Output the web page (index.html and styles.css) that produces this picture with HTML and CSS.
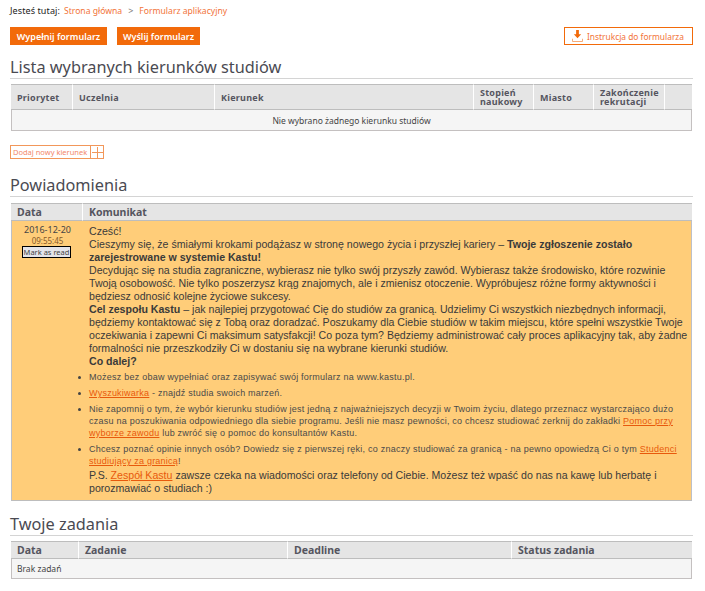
FILE: index.html
```html
<!DOCTYPE html>
<html lang="pl">
<head>
<meta charset="utf-8">
<title>Formularz aplikacyjny</title>
<link rel="stylesheet" href="styles.css">
</head>
<body>
<div class="page">
  <nav class="crumbs"><span class="here">Jesteś tutaj:</span><a href="#">Strona główna</a><span class="sep">&gt;</span><a href="#">Formularz aplikacyjny</a></nav>
  <div class="actions">
    <a class="btn" href="#">Wypełnij formularz</a>
    <a class="btn" href="#">Wyślij formularz</a>
    <a class="btn-outline" href="#">
      <svg class="dl" width="11" height="12" viewBox="0 0 12 13"><path d="M4.500 0h3v4.500H10L6 9 2 4.500h2.500z" fill="#f26a0a"/><path d="M.5 9.500v3h11v-3" fill="none" stroke="#f6a36a"/></svg>
      Instrukcja do formularza
    </a>
  </div>

  <h2 class="title t1">Lista wybranych kierunków studiów</h2>
  <table class="grid g1">
    <colgroup><col class="c1"><col class="c2"><col class="c3"><col class="c4"><col class="c5"><col class="c6"><col></colgroup>
    <thead><tr><th>Priorytet</th><th>Uczelnia</th><th>Kierunek</th><th>Stopień naukowy</th><th>Miasto</th><th>Zakończenie rekrutacji</th><th></th></tr></thead>
    <tbody><tr><td colspan="7" class="empty">Nie wybrano żadnego kierunku studiów</td></tr></tbody>
  </table>
  <a class="add" href="#"><span class="add-label">Dodaj nowy kierunek</span><span class="add-icon"><svg width="11" height="11" viewBox="0 0 11 11"><path d="M5.500 0v11M0 5.500h11" stroke="#f2975a" fill="none"/></svg></span></a>

  <h2 class="title t2">Powiadomienia</h2>
  <table class="grid g2">
    <colgroup><col class="d1"><col></colgroup>
    <thead><tr><th>Data</th><th>Komunikat</th></tr></thead>
    <tbody><tr class="unread">
      <td class="date"><div>2016-12-20</div><div class="time">09:55:45</div><button class="mark" type="button">Mark as read</button></td>
      <td class="msg">
        <p>Cześć!</p>
        <p>Cieszymy się, że śmiałymi krokami podążasz w stronę nowego życia i przyszłej kariery – <b>Twoje zgłoszenie zostało zarejestrowane w systemie Kastu!</b></p>
        <p>Decydując się na studia zagraniczne, wybierasz nie tylko swój przyszły zawód. Wybierasz także środowisko, które rozwinie Twoją osobowość. Nie tylko poszerzysz krąg znajomych, ale i zmienisz otoczenie. Wypróbujesz różne formy aktywności i będziesz odnosić kolejne życiowe sukcesy.</p>
        <p><b>Cel zespołu Kastu</b> – jak najlepiej przygotować Cię do studiów za granicą. Udzielimy Ci wszystkich niezbędnych informacji, będziemy kontaktować się z Tobą oraz doradzać. Poszukamy dla Ciebie studiów w takim miejscu, które spełni wszystkie Twoje oczekiwania i zapewni Ci maksimum satysfakcji! Co poza tym? Będziemy administrować cały proces aplikacyjny tak, aby żadne formalności nie przeszkodziły Ci w dostaniu się na wybrane kierunki studiów.</p>
        <p><b>Co dalej?</b></p>
        <ul>
          <li>Możesz bez obaw wypełniać oraz zapisywać swój formularz na www.kastu.pl.</li>
          <li><a href="#">Wyszukiwarka</a> - znajdź studia swoich marzeń.</li>
          <li>Nie zapomnij o tym, że wybór kierunku studiów jest jedną z najważniejszych decyzji w Twoim życiu, dlatego przeznacz wystarczająco dużo czasu na poszukiwania odpowiedniego dla siebie programu. Jeśli nie masz pewności, co chcesz studiować zerknij do zakładki <a href="#">Pomoc przy wyborze zawodu</a> lub zwróć się o pomoc do konsultantów Kastu.</li>
          <li>Chcesz poznać opinie innych osób? Dowiedz się z pierwszej ręki, co znaczy studiować za granicą - na pewno opowiedzą Ci o tym <a href="#">Studenci studiujący za granicą</a>!</li>
        </ul>
        <p>P.S. <a href="#">Zespół Kastu</a> zawsze czeka na wiadomości oraz telefony od Ciebie. Możesz też wpaść do nas na kawę lub herbatę i porozmawiać o studiach :)</p>
      </td>
    </tr></tbody>
  </table>

  <h2 class="title t3">Twoje zadania</h2>
  <table class="grid g3">
    <colgroup><col class="e1"><col class="e2"><col class="e3"><col></colgroup>
    <thead><tr><th>Data</th><th>Zadanie</th><th>Deadline</th><th>Status zadania</th></tr></thead>
    <tbody><tr><td colspan="4" class="none">Brak zadań</td></tr></tbody>
  </table>
</div>
</body>
</html>
```

FILE: styles.css
```css
* { box-sizing: border-box; }
html, body { margin: 0; padding: 0; background: #fff; }
body { font-family: "Noto Sans", sans-serif; color: #333; overflow: hidden; }
.page { width: 683px; margin-left: 10px; }

.crumbs { height: 27px; padding-top: 5px; font-size: 9px; line-height: 12px; white-space: nowrap; }
.crumbs a { color: #f2743a; text-decoration: none; font-size: 8.600px; }
.here { color: #222; margin-right: 4px; letter-spacing: .1px; }
.sep { color: #777; margin: 0 6px; }

.actions { display: flex; gap: 10px; height: 18px; }
.btn { display: flex; align-items: center; justify-content: center; height: 18px; background: #f26a0a; color: #fff; font-size: 9px; font-weight: 600; text-decoration: none; white-space: nowrap; }
.btn:nth-child(1) { width: 97px; }
.btn:nth-child(2) { width: 83px; }
.btn-outline { margin-left: auto; width: 129px; height: 18px; display: flex; align-items: center; gap: 4px; padding-left: 7px; border: 1px solid #f26a0a; color: #f2743a; font-size: 8.400px; text-decoration: none; white-space: nowrap; }
.dl { flex: none; }

.title { margin: 0; font-weight: 400; font-size: 16.300px; line-height: 20px; color: #4a4a52; border-bottom: 1px solid #d4d4d4; }
.t1 { margin-top: 12px; height: 22px; }
.t2 { margin-top: 16px; height: 22px; }
.t3 { margin-top: 13px; height: 22px; }

.grid { width: 681px; margin-left: 1px; table-layout: fixed; border-collapse: separate; border-spacing: 0; font-size: 9px; }
.grid th { background: #e5e5e5; border-top: 1px solid #bdbdbd; border-bottom: 1px solid #bdbdbd; border-right: 1px solid #fff; padding: 0 0 0 6px; text-align: left; font-weight: 700; color: #55555f; vertical-align: middle; }
.grid th:last-child { border-right: 0; }
.grid td { background: #f5f5f5; }

.g1 { margin-top: 5px; }
.g1 th { height: 26px; font-size: 9px; line-height: 9px; letter-spacing: .25px; }
.c1 { width: 62px; } .c2 { width: 142px; } .c3 { width: 259px; } .c4 { width: 60px; } .c5 { width: 60px; } .c6 { width: 71px; }
.empty { height: 21px; border: 1px solid #c4c0c0; border-top: 0; text-align: center; font-size: 8.500px; color: #444; }

.add { display: flex; width: 94px; height: 14px; margin-top: 14px; border: 1px solid #f2975a; text-decoration: none; }
.add-label { flex: none; width: 80px; font-size: 7.500px; line-height: 12px; color: #f2876a; padding-left: 2px; white-space: nowrap; border-right: 1px solid #f2975a; }
.add-icon { display: flex; align-items: center; padding-left: 1px; }

.g2 { margin-top: 6px; }
.g2 th { height: 18px; font-size: 10.500px; }
.d1 { width: 72px; }
.unread td { background: #ffcd79; vertical-align: top; border-bottom: 1px solid #bdbdbd; }
.unread .date { border-left: 1px solid #bdc0c8; text-align: center; font-size: 9px; line-height: 12px; padding-top: 3px; color: #444; }
.unread .time { font-size: 8px; line-height: 9px; color: #85592a; }
.mark { display: block; width: 49px; height: 12px; margin: 1px 0 0 9px; padding: 0; background: #e4e4ea; border: 1px solid #000; outline: 0; font: 7.500px/10px "Noto Sans", sans-serif; color: #444; white-space: nowrap; }
.unread .msg { border-right: 1px solid #bdc0c8; padding: 4px 0 5px 6px; font-family: "Liberation Sans", sans-serif; font-size: 10.600px; line-height: 13px; color: #3a3a3a; }
.msg p { margin: 0; }
.msg a { color: #e8590c; }
.msg ul { margin: 3px 8px 2px 0; padding: 0; list-style: none; }
.msg li { position: relative; font-size: 9px; line-height: 12px; letter-spacing: .24px; margin-bottom: 4px; color: #4a4a4a; }
.msg li:last-child { margin-bottom: 0; }
.msg li::before { content: ""; position: absolute; left: -11px; top: 5px; width: 3px; height: 3px; border-radius: 50%; background: #444; }

.g3 { margin-top: 5px; }
.g3 th { height: 18px; font-size: 10.500px; }
.e1 { width: 68px; } .e2 { width: 209px; } .e3 { width: 224px; }
.none { height: 20px; border: 1px solid #c4c0c0; border-top: 0; padding-left: 5px; font-size: 8.500px; color: #444; }
```
